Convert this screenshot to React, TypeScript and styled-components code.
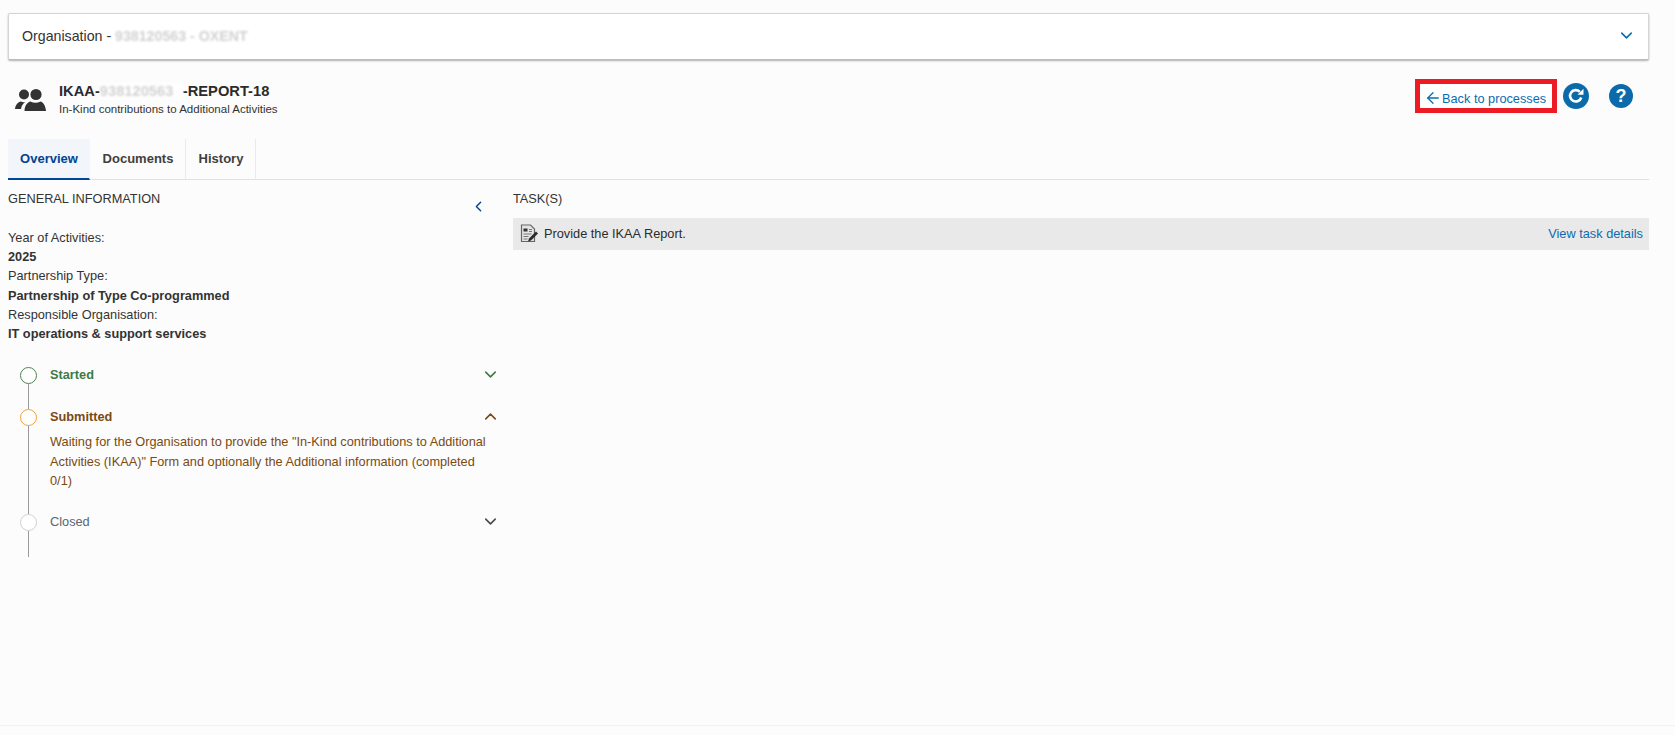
import React from "react";
import styled, { createGlobalStyle } from "styled-components";
import { ChevronDown, ChevronUp, ChevronLeft, ArrowLeft } from "lucide-react";

const GlobalStyle = createGlobalStyle`
  html, body {
    margin: 0;
    padding: 0;
    background: #fcfcfc;
  }
  * { box-sizing: border-box; }
`;

const Page = styled.div`
  height: 735px;
  padding: 13px 26px 0 8px;
  overflow: hidden;
  display: flex;
  flex-direction: column;
  font-family: "Liberation Sans", Arial, sans-serif;
  font-size: 12.75px;
  color: #333;
`;

const Footer = styled.div`
  margin: auto -26px 0 -8px;
  height: 10px;
  flex: none;
  border-top: 1px solid #f3f3f3;
`;

const OrgCard = styled.div`
  height: 47px;
  flex: none;
  background: #fff;
  border: 1px solid #d4d4d4;
  border-bottom: 1px solid #bbb;
  border-radius: 2px;
  box-shadow: 0 1px 2px rgba(0, 0, 0, 0.3);
  display: flex;
  align-items: center;
  justify-content: space-between;
  padding: 0 12px 2px 13px;
  font-size: 14.2px;
  color: #333;
`;

const Blurred = styled.span<{ $wide: number }>`
  display: inline-block;
  width: ${(p) => p.$wide}px;
  color: #d2d2d2;
  background: rgba(255, 255, 255, 0.8);
  font-weight: 700;
  filter: blur(0.9px);
  white-space: nowrap;
`;

const Header = styled.div`
  height: 79px;
  flex: none;
  display: flex;
  justify-content: space-between;
  align-items: flex-start;
`;

const TitleBlock = styled.div`
  display: flex;
  align-items: center;
  gap: 13px;
  padding: 23px 0 0 7px;
`;

const TitleText = styled.div`
  display: flex;
  flex-direction: column;
  gap: 3px;
`;

const Title = styled.div`
  font-size: 14.7px;
  font-weight: 700;
  line-height: 16px;
  color: #2b2b2b;
`;

const Subtitle = styled.div`
  font-size: 11.5px;
  line-height: 14px;
  color: #333;
`;

const Actions = styled.div`
  display: flex;
  align-items: center;
  padding: 19px 16px 0 0;
`;

const BackLink = styled.a`
  width: 142px;
  height: 34px;
  border: 5px solid #ed1c24;
  background: #fff;
  display: flex;
  align-items: center;
  padding: 4px 0 0 4px;
  color: #0a6cb0;
  font-size: 12.75px;
  white-space: nowrap;
`;

const RoundIcon = styled.span<{ $gap: number; $size: number }>`
  width: ${(p) => p.$size}px;
  height: ${(p) => p.$size}px;
  margin-left: ${(p) => p.$gap}px;
  border-radius: 50%;
  background: #0a6aaa;
  display: flex;
  align-items: center;
  justify-content: center;
  color: #fff;
  font-weight: 700;
  font-size: 18px;
`;

const Tabs = styled.div`
  display: flex;
  flex: none;
  height: 41px;
  border-bottom: 1px solid #e0e0e0;
`;

const Tab = styled.div<{ $active?: boolean; $wide: number }>`
  width: ${(p) => p.$wide}px;
  display: flex;
  align-items: center;
  justify-content: center;
  padding-left: 1px;
  font-size: 13px;
  font-weight: 700;
  color: ${(p) => (p.$active ? "#004494" : "#404040")};
  background: ${(p) => (p.$active ? "#f2f5fa" : "transparent")};
  border-right: 1px solid ${(p) => (p.$active ? "transparent" : "#eaeaea")};
  border-bottom: 2px solid ${(p) => (p.$active ? "#004494" : "transparent")};
  margin-bottom: -1px;
`;

const Columns = styled.div`
  display: grid;
  grid-template-columns: 505px 1fr;
`;

const LeftColumn = styled.div`
  display: flex;
  flex-direction: column;
`;

const SectionHead = styled.div<{ $height: number }>`
  display: flex;
  justify-content: space-between;
  height: ${(p) => p.$height}px;
  padding-top: 11px;
  line-height: 16px;
  color: #333;
`;

const CollapseBtn = styled.span`
  color: #004494;
  display: flex;
  margin: 7px 26px 0 0;
`;

const InfoLabel = styled.div`
  line-height: 19.2px;
`;

const InfoValue = styled.div`
  line-height: 19.2px;
  font-weight: 700;
`;

const Timeline = styled.div`
  margin-top: 24px;
  padding-left: 12px;
  width: 492px;
`;

const Step = styled.div<{ $height: number }>`
  display: grid;
  grid-template-columns: 30px minmax(0, 1fr);
  height: ${(p) => p.$height}px;
`;

const Gutter = styled.div`
  display: flex;
  flex-direction: column;
  align-items: center;
  width: 17px;
`;

const Dot = styled.span<{ $color: string }>`
  width: 17px;
  height: 17px;
  flex: none;
  border-radius: 50%;
  background: #fff;
  border: 1.5px solid ${(p) => p.$color};
`;

const Rail = styled.span`
  flex: 1;
  width: 1px;
  background: #999;
`;

const StepBody = styled.div`
  display: flex;
  flex-direction: column;
`;

const StepHead = styled.div<{ $color: string; $bold?: boolean }>`
  display: flex;
  justify-content: space-between;
  align-items: center;
  height: 16px;
  margin-top: -1px;
  color: ${(p) => p.$color};
  font-weight: ${(p) => (p.$bold ? 700 : 400)};
`;

const StepText = styled.div`
  color: #7a4a10;
  line-height: 19.5px;
  margin-top: 8px;
  width: 445px;
`;

const TaskRow = styled.div`
  height: 32px;
  background: #e9e9e9;
  display: flex;
  align-items: center;
  padding: 0 6px 1px 7px;
  gap: 5px;
`;

const TaskName = styled.div`
  flex: 1;
  color: #2c2c2c;
`;

const TaskLink = styled.a`
  color: #0a6cb0;
`;

const UsersIcon = () => (
  <svg width="31" height="24" viewBox="0 0 31 24" fill="#333">
    <circle cx="9" cy="6.5" r="5" />
    <circle cx="21" cy="6.5" r="5.6" />
    <path d="M0 21c.5-4 3-7 6-7.4 1.5.8 3 .9 4.5.5C7.8 15.8 6.5 18 6 21z" />
    <path d="M9.5 23c0-6 4-9.5 6-9.5 3 1.6 7 1.6 10 0 2 0 5 3.5 5.5 9.500z" />
  </svg>
);

const RefreshIcon = () => (
  <svg width="18" height="18" viewBox="0 0 18 18" fill="none">
    <path d="M14.2 10.500A5.700 5.700 0 1 1 12.800 4.800" stroke="#fff" strokeWidth="2.600" />
    <path d="M10.500 7.800h6V1.800z" fill="#fff" />
  </svg>
);

const DocIcon = () => (
  <svg width="19" height="19" viewBox="0 0 19 19">
    <path d="M1.500 1h9l4 4v12.500h-13z" fill="#e4e4e4" stroke="#666" strokeWidth="1.200" />
    <path d="M3.500 4.500h4v3h-4z" fill="#333" />
    <path d="M9 5.500h3M9 7.500h3M3.500 10h8M3.500 12.500h5M3.500 15h4" stroke="#777" strokeWidth="1" />
    <path d="M8 17.500l1-3 7-7 2 2-7 7z" fill="#2b2b2b" />
  </svg>
);

export default function App() {
  return (
    <Page>
      <GlobalStyle />
      <OrgCard>
        <span>
          Organisation - <Blurred $wide={131}>938120563 - OXENT</Blurred>
        </span>
        <ChevronDown size={19} color="#0a6cb0" strokeWidth={2} />
      </OrgCard>
      <Header>
        <TitleBlock>
          <UsersIcon />
          <TitleText>
            <Title>
              IKAA-<Blurred $wide={83}>938120563</Blurred>-REPORT-18
            </Title>
            <Subtitle>In-Kind contributions to Additional Activities</Subtitle>
          </TitleText>
        </TitleBlock>
        <Actions>
          <BackLink>
            <ArrowLeft size={18} strokeWidth={1.700} />
            Back to processes
          </BackLink>
          <RoundIcon $gap={6} $size={26}>
            <RefreshIcon />
          </RoundIcon>
          <RoundIcon $gap={20} $size={24}>
            ?
          </RoundIcon>
        </Actions>
      </Header>
      <Tabs>
        <Tab $active $wide={82}>
          Overview
        </Tab>
        <Tab $wide={96}>Documents</Tab>
        <Tab $wide={70}>History</Tab>
      </Tabs>
      <Columns>
        <LeftColumn>
          <SectionHead $height={48}>
            GENERAL INFORMATION
            <CollapseBtn>
              <ChevronLeft size={17} strokeWidth={2} />
            </CollapseBtn>
          </SectionHead>
          <InfoLabel>Year of Activities:</InfoLabel>
          <InfoValue>2025</InfoValue>
          <InfoLabel>Partnership Type:</InfoLabel>
          <InfoValue>Partnership of Type Co-programmed</InfoValue>
          <InfoLabel>Responsible Organisation:</InfoLabel>
          <InfoValue>IT operations &amp; support services</InfoValue>
          <Timeline>
            <Step $height={42}>
              <Gutter>
                <Dot $color="#4f7f52" />
                <Rail />
              </Gutter>
              <StepBody>
                <StepHead $color="#3f7a45" $bold>
                  Started
                  <ChevronDown size={19} color="#3f7a45" />
                </StepHead>
              </StepBody>
            </Step>
            <Step $height={105}>
              <Gutter>
                <Dot $color="#f0a040" />
                <Rail />
              </Gutter>
              <StepBody>
                <StepHead $color="#7a4a10" $bold>
                  Submitted
                  <ChevronUp size={19} color="#7a4a10" />
                </StepHead>
                <StepText>
                  Waiting for the Organisation to provide the "In-Kind
                  contributions to Additional Activities (IKAA)" Form and
                  optionally the Additional information (completed 0/1)
                </StepText>
              </StepBody>
            </Step>
            <Step $height={43}>
              <Gutter>
                <Dot $color="#d0d0d0" />
                <Rail />
              </Gutter>
              <StepBody>
                <StepHead $color="#5a6670">
                  Closed
                  <ChevronDown size={19} color="#4a4a4a" />
                </StepHead>
              </StepBody>
            </Step>
          </Timeline>
        </LeftColumn>
        <div>
          <SectionHead $height={38}>TASK(S)</SectionHead>
          <TaskRow>
            <DocIcon />
            <TaskName>Provide the IKAA Report.</TaskName>
            <TaskLink>View task details</TaskLink>
          </TaskRow>
        </div>
      </Columns>
      <Footer />
    </Page>
  );
}
